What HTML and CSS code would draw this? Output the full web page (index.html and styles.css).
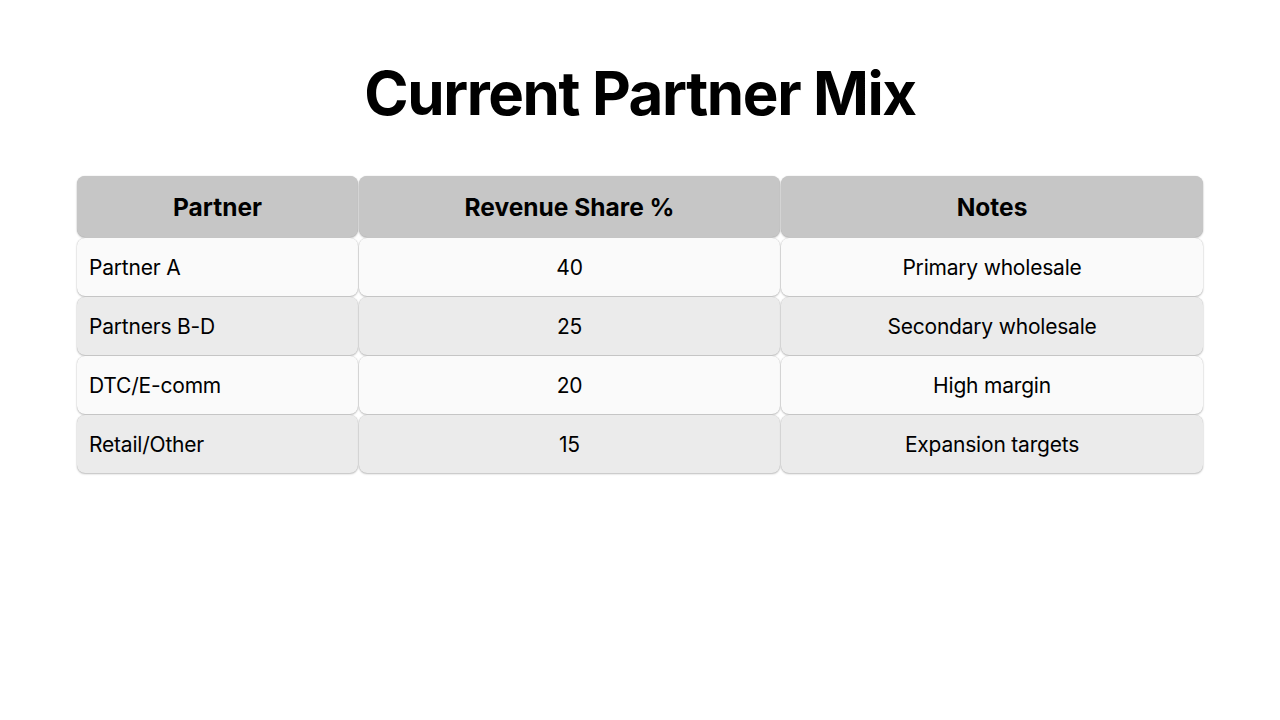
FILE: index.html
```html
<!DOCTYPE html>
<html>
<head>
<meta charset="utf-8">
<link rel="stylesheet" href="styles.css">
</head>
<body>
<div class="slide">
  <h1 class="title">Current Partner Mix</h1>
  <div class="table">
    <div class="cell head">Partner</div>
    <div class="cell head">Revenue Share %</div>
    <div class="cell head">Notes</div>

    <div class="cell odd left">Partner A</div>
    <div class="cell odd">40</div>
    <div class="cell odd">Primary wholesale</div>

    <div class="cell even left">Partners B-D</div>
    <div class="cell even">25</div>
    <div class="cell even">Secondary wholesale</div>

    <div class="cell odd left">DTC/E-comm</div>
    <div class="cell odd">20</div>
    <div class="cell odd">High margin</div>

    <div class="cell even left">Retail/Other</div>
    <div class="cell even">15</div>
    <div class="cell even">Expansion targets</div>
  </div>
</div>
</body>
</html>
```
FILE: styles.css
```css
html, body {
  margin: 0;
  padding: 0;
  background: #ffffff;
}
body {
  font-family: Inter, "Noto Sans", sans-serif;
  color: #000;
}
.slide {
  width: 1280px;
  height: 720px;
  display: flex;
  flex-direction: column;
  align-items: center;
}
.title {
  margin: 56px 0 0 0;
  font-size: 60px;
  line-height: 74px;
  font-weight: 700;
  letter-spacing: -1.4px;
}
.table {
  margin-top: 46px;
  display: grid;
  grid-template-columns: 281px 421px 422px;
  grid-template-rows: 61px 58px 58px 58px 58px;
  gap: 1px;
  width: 1126px;
}
.cell {
  border-radius: 8px;
  display: flex;
  align-items: center;
  justify-content: center;
  font-size: 21px;
  letter-spacing: -0.2px;
  box-shadow: 0 1px 2px rgba(0,0,0,0.25), 0 0 1px rgba(0,0,0,0.2);
}
.head {
  background: #c6c6c6;
  font-weight: 700;
  font-size: 24.5px;
  letter-spacing: 0;
}
.odd { background: #fafafa; }
.even { background: #ebebeb; }
.left {
  justify-content: flex-start;
  padding-left: 12px;
}
```
